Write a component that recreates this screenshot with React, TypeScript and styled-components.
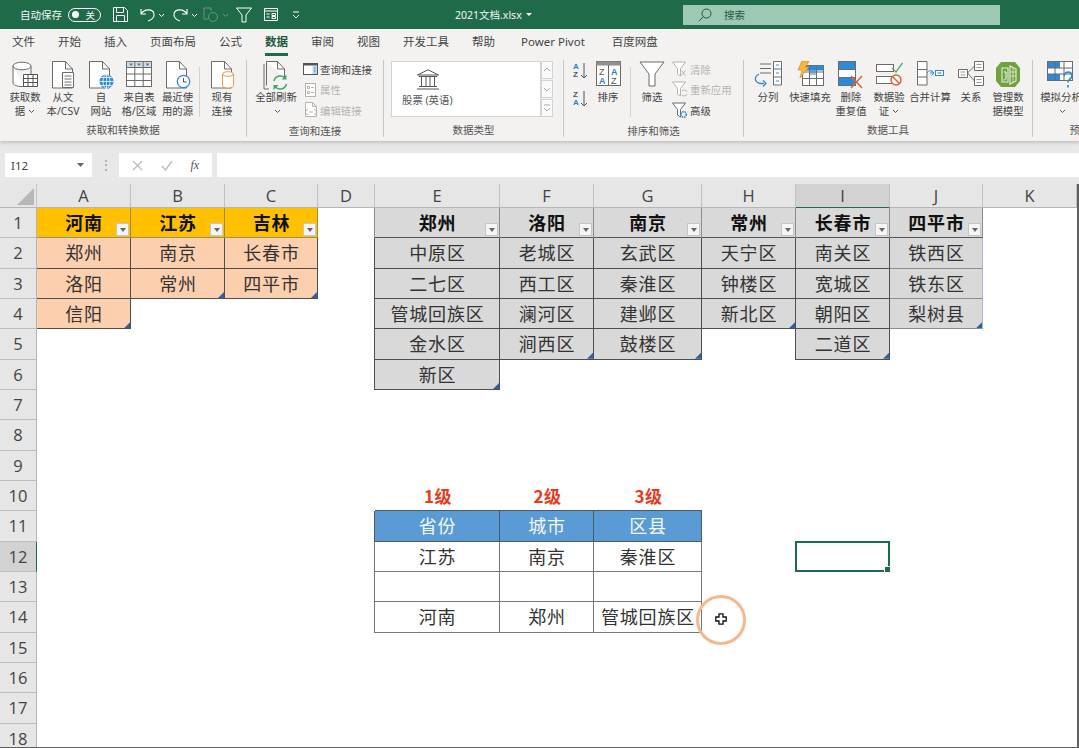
import React from 'react';
import styled, { createGlobalStyle } from 'styled-components';

const GlobalStyle = createGlobalStyle`
  html, body { margin: 0; padding: 0; background: #fff; }
  body { font-family: "Noto Sans", "Noto Sans CJK SC", sans-serif; overflow: hidden; }
`;

const Page = styled.div`
  width: 1079px;
  height: 748px;
  display: flex;
  flex-direction: column;
  overflow: hidden;
`;

/* title bar */
const TitleBar = styled.div`
  height: 29px;
  flex: none;
  background: #1f6b49;
  color: #f2f7f4;
  display: flex;
  align-items: center;
  padding-left: 20px;
  box-sizing: border-box;
`;
const QuickBar = styled.div`
  width: 435px;
  display: flex;
  align-items: center;
`;
const AutoSave = styled.span`
  font-size: 10.5px;
  width: 48px;
`;
const Toggle = styled.span`
  width: 33px;
  height: 14px;
  box-sizing: border-box;
  border: 1px solid #fff;
  border-radius: 7px;
  display: flex;
  align-items: center;
  justify-content: space-between;
  padding: 0 5px 0 3px;
  font-size: 9.5px;
  margin-right: 12px;
  &::before {
    content: '';
    width: 7px;
    height: 7px;
    border-radius: 50%;
    background: #fff;
  }
`;
const QuickIcon = styled.span<{ $w: number }>`
  width: ${({ $w }) => $w}px;
  display: flex;
  align-items: center;
`;
const FileName = styled.div`
  width: 228px;
  font-size: 10.5px;
  display: flex;
  align-items: center;
  gap: 4px;
`;
const SearchBox = styled.div`
  width: 317px;
  height: 20px;
  background: #9cc8b4;
  color: #1d5a3f;
  font-size: 10.5px;
  display: flex;
  align-items: center;
  gap: 12px;
  padding-left: 15px;
  box-sizing: border-box;
`;

/* tabs */
const TabRow = styled.div`
  height: 27px;
  flex: none;
  background: #f3f2f1;
  display: flex;
  gap: 23px;
  padding-left: 12px;
  box-sizing: border-box;
`;
const Tab = styled.div<{ $active?: boolean; $latin?: boolean }>`
  height: 27px;
  box-sizing: border-box;
  padding: 5px ${({ $latin }) => ($latin ? '4px 0 3px' : '0 0 0')};
  font-size: 11.5px;
  line-height: 16px;
  white-space: nowrap;
  color: ${({ $active }) => ($active ? '#1e5b3e' : '#444')};
  font-weight: ${({ $active }) => ($active ? 600 : 400)};
  border-bottom: ${({ $active }) => ($active ? '3px solid #1f6b49' : '3px solid transparent')};
`;

/* ribbon */
const Ribbon = styled.div`
  height: 85px;
  flex: none;
  background: #f3f2f1;
  display: flex;
  box-shadow: 0 2px 3px rgba(0, 0, 0, 0.16);
  position: relative;
  z-index: 2;
  overflow: hidden;
`;
const Group = styled.div<{ $w: number; $pad: number; $last?: boolean }>`
  width: ${({ $w }) => $w}px;
  flex: none;
  box-sizing: border-box;
  margin-top: 4px;
  margin-bottom: 4px;
  padding-left: ${({ $pad }) => $pad}px;
  border-right: ${({ $last }) => ($last ? 'none' : '1px solid #c9c7c5')};
  display: flex;
  flex-direction: column;
`;
const GroupBody = styled.div`
  height: 60px;
  display: flex;
  align-items: flex-start;
  padding-top: 1px;
`;
const GroupLabel = styled.div<{ $pad: number }>`
  margin-left: -${({ $pad }) => $pad}px;
  text-align: center;
  font-size: 10.5px;
  line-height: 14px;
  color: #555;
  margin-top: 3px;
  white-space: nowrap;
`;
const BigButton = styled.div<{ $w: number }>`
  width: ${({ $w }) => $w}px;
  flex: none;
  display: flex;
  flex-direction: column;
  align-items: center;
`;
const BigIcon = styled.div`
  height: 30px;
  display: flex;
  align-items: flex-start;
  justify-content: center;
`;
const BigLabel = styled.div`
  font-size: 10.4px;
  line-height: 13.5px;
  color: #444;
  text-align: center;
  white-space: pre-line;
`;
const Divider = styled.div<{ $ml: number; $mr: number }>`
  width: 1px;
  height: 50px;
  margin: 6px ${({ $mr }) => $mr}px 0 ${({ $ml }) => $ml}px;
  background: #d4d2d0;
  flex: none;
`;
const SmallColumn = styled.div<{ $ml: number }>`
  margin: -2px 0 0 ${({ $ml }) => $ml}px;
  display: flex;
  flex-direction: column;
  flex: none;
`;
const SmallButton = styled.div<{ $off?: boolean }>`
  height: 20.5px;
  display: flex;
  align-items: center;
  gap: 1px;
  font-size: 10.4px;
  white-space: nowrap;
  color: ${({ $off }) => ($off ? '#b5b3b1' : '#444')};
`;
const SortColumn = styled.div`
  width: 15px;
  margin: 0 2px 0 1px;
  flex: none;
  display: flex;
  flex-direction: column;
  gap: 8px;
`;
const TypeBox = styled.div`
  width: 150px;
  height: 56px;
  box-sizing: border-box;
  background: #fff;
  border: 1px solid #d6d4d2;
  display: flex;
  flex-direction: column;
  padding: 7px 0 0 10px;
  font-size: 10.4px;
  line-height: 14px;
  color: #555;
  gap: 3px;
`;
const BankWrap = styled.div`
  width: 52px;
  height: 21px;
  display: flex;
  justify-content: center;
`;
const ScrollColumn = styled.div`
  width: 12px;
  height: 56px;
  display: flex;
  flex-direction: column;
  gap: 1px;
`;
const ScrollButton = styled.div`
  flex: 1;
  background: #fafafa;
  border: 1px solid #d6d4d2;
  display: flex;
  align-items: center;
  justify-content: center;
`;
const ChevronMark = styled.svg`
  margin-left: 3px;
  vertical-align: 1px;
`;

/* formula bar */
const FormulaBar = styled.div`
  height: 43px;
  flex: none;
  background: #e8e8e8;
  display: flex;
  align-items: center;
  padding: 5px 0 0 5px;
  box-sizing: border-box;
`;
const NameBox = styled.div`
  width: 87px;
  height: 24px;
  background: #fff;
  box-sizing: border-box;
  display: flex;
  align-items: center;
  justify-content: space-between;
  padding: 0 7px 0 6px;
  font-size: 11.5px;
  color: #444;
`;
const GripDots = styled.div`
  width: 27px;
  text-align: center;
  color: #9a9a9a;
  font-size: 12px;
  line-height: 12px;
`;
const FormulaTools = styled.div`
  width: 93px;
  height: 24px;
  background: #fff;
  display: flex;
  align-items: center;
  justify-content: space-around;
  padding: 0 4px;
  box-sizing: border-box;
  margin-right: 5px;
`;
const FxMark = styled.span`
  font-family: "Liberation Serif", serif;
  font-style: italic;
  font-size: 12px;
  color: #555;
`;
const FormulaInput = styled.div`
  flex: 1;
  height: 24px;
  background: #fff;
`;

/* sheet */
const Sheet = styled.div`
  position: relative;
  flex: 1;
  min-height: 0;
  overflow: hidden;
  display: grid;
  grid-template-columns: 37px 94px 94px 93px 57px 125px 94px 108px 94px 94px 93px 94px;
  grid-template-rows: 24px repeat(18, 30.33px);
  border-right: 2px solid #5f5f5f;
  border-bottom: 1px solid #5f5f5f;
  background: #fff;
`;
const SelectAll = styled.div`
  grid-column: 1;
  grid-row: 1;
  background: #e6e6e6;
  border-right: 1px solid #c4c4c4;
  border-bottom: 1px solid #b5b5b5;
  display: flex;
  align-items: flex-end;
  justify-content: flex-end;
  padding: 0 2px 2px 0;
  &::after {
    content: '';
    width: 17px;
    height: 17px;
    background: #b7b7b7;
    clip-path: polygon(100% 0, 100% 100%, 0 100%);
  }
`;
const ColHead = styled.div<{ $col: number; $on?: boolean }>`
  grid-column: ${({ $col }) => $col};
  grid-row: 1;
  background: ${({ $on }) => ($on ? '#d2d2d2' : '#e6e6e6')};
  border-right: 1px solid #c0c0c0;
  border-bottom: ${({ $on }) => ($on ? '1px solid #1f6b49' : '1px solid #b5b5b5')};
  font-family: "Open Sans", sans-serif;
  font-size: 16.5px;
  line-height: 24px;
  text-align: center;
  color: #444;
`;
const RowHead = styled.div<{ $row: number; $on?: boolean }>`
  grid-column: 1;
  grid-row: ${({ $row }) => $row};
  background: ${({ $on }) => ($on ? '#d2d2d2' : '#e6e6e6')};
  border-right: ${({ $on }) => ($on ? '1px solid #1f6b49' : '1px solid #b5b5b5')};
  border-bottom: 1px solid #bdbdbd;
  box-sizing: border-box;
  font-family: "Open Sans", sans-serif;
  font-size: 16.5px;
  text-align: center;
  color: #444;
  display: flex;
  align-items: center;
  justify-content: center;
`;

type Kind = 'orange' | 'peach' | 'grayHead' | 'gray' | 'grayLight' | 'blue' | 'plain' | 'level';

const kindStyles: Record<Kind, string> = {
  orange: 'background:#ffc000;color:#111;font-weight:700;border-right:1px solid #a38a3a;border-bottom:1px solid #8f8f7a;',
  peach: 'background:#fccfae;color:#333;border-right:1px solid #4f4f4f;border-bottom:1px solid #4f4f4f;',
  grayHead: 'background:#d9d9d9;color:#111;font-weight:700;border-right:1px solid #8c8c8c;border-bottom:1px solid #555;box-shadow:-1px 0 0 #8c8c8c;',
  gray: 'background:#d9d9d9;color:#333;border-right:1px solid #4f4f4f;border-bottom:1px solid #4f4f4f;box-shadow:-1px 0 0 #4f4f4f;',
  grayLight: 'background:#d9d9d9;color:#333;border-right:1px solid #a9b8c8;border-bottom:1px solid #8c8c8c;',
  blue: 'background:#5b9bd5;color:#f4f8fc;border-right:1px solid #4c5a68;border-bottom:1px solid #4c5a68;box-shadow:-1px 0 0 #4c5a68,0 -1px 0 #4c5a68;',
  plain: 'background:#fff;color:#333;border-right:1px solid #777;border-bottom:1px solid #777;box-shadow:-1px 0 0 #777;',
  level: 'color:#e8391a;font-weight:700;font-size:17px;letter-spacing:0.4px;',
};

const Cell = styled.div<{ $col: number; $row: number; $kind: Kind }>`
  grid-column: ${({ $col }) => $col};
  grid-row: ${({ $row }) => $row};
  position: relative;
  box-sizing: border-box;
  display: flex;
  align-items: center;
  justify-content: center;
  padding: 0 0 1px 1px;
  font-family: "Noto Sans CJK SC", sans-serif;
  font-size: 18px;
  letter-spacing: 0.8px;
  white-space: nowrap;
  ${({ $kind }) => kindStyles[$kind]}
`;
const FilterButton = styled.span`
  position: absolute;
  right: 1px;
  bottom: 1px;
  width: 13px;
  height: 13px;
  box-sizing: border-box;
  background: #f5f5f5;
  border: 1px solid #c6c6c6;
  &::after {
    content: '';
    position: absolute;
    left: 2.5px;
    top: 4px;
    border-left: 3.5px solid transparent;
    border-right: 3.5px solid transparent;
    border-top: 4px solid #666;
  }
`;
const TableCorner = styled.span`
  position: absolute;
  right: 0;
  bottom: 0;
  width: 6px;
  height: 6px;
  background: #2f619e;
  clip-path: polygon(100% 0, 100% 100%, 0 100%);
`;
const ActiveCell = styled.div`
  grid-column: 10;
  grid-row: 13;
  position: relative;
  box-sizing: border-box;
  border: 2px solid #1f6b49;
  margin: -1px 0 0 -1px;
  &::after {
    content: '';
    position: absolute;
    right: -3px;
    bottom: -3px;
    width: 5px;
    height: 5px;
    background: #1f6b49;
    border: 1px solid #fff;
  }
`;
const ClickRing = styled.div`
  position: absolute;
  left: 696px;
  top: 411px;
  width: 50px;
  height: 50px;
  box-sizing: border-box;
  border: 3.5px solid #f6b78f;
  border-radius: 50%;
`;
const PointerMark = styled.svg`
  position: absolute;
  left: 715px;
  top: 429px;
`;

/* icons */
const G = '#6b6b6b';

const Chevron = () => (
  <ChevronMark width="7" height="5" viewBox="0 0 7 5">
    <path d="M1 1l2.5 2.5L6 1" fill="none" stroke="#555" strokeWidth="1" />
  </ChevronMark>
);

const DocShape = () => (
  <>
    <path d="M1.5.5h13l7 7.5v19h-20z" fill="#fff" stroke={G} />
    <path d="M14.5.5V8h7" fill="none" stroke={G} />
  </>
);

const IconDb = () => (
  <svg width="26" height="27" viewBox="0 0 26 27">
    <path d="M1 5v17c0 2.2 4 3.5 9 3.5h2M19 5v9" fill="#fff" stroke={G} />
    <ellipse cx="10" cy="5" rx="9" ry="3.8" fill="#fff" stroke={G} />
    <path d="M11.5 13.5h14v12h-14zM11.5 17.5h14M11.5 21.5h14M16 13.5v12M21 13.5v12" fill="#fff" stroke="#555" />
  </svg>
);
const IconText = () => (
  <svg width="24" height="28" viewBox="0 0 24 28">
    <DocShape />
    <path d="M11.5 11.5h11v15h-11zM13.5 15h7M13.5 18h7M13.5 21h7M13.5 24h7" fill="#fff" stroke={G} />
  </svg>
);
const IconWeb = () => (
  <svg width="26" height="28" viewBox="0 0 26 28">
    <DocShape />
    <circle cx="18.5" cy="20.5" r="7" fill="#2e8ad8" />
    <path d="M11.5 20.5h14M18.5 13.5v14M13 16.5h11M13 24.5h11" stroke="#fff" strokeWidth="0.8" fill="none" />
    <ellipse cx="18.5" cy="20.5" rx="3.5" ry="7" fill="none" stroke="#fff" strokeWidth="0.8" />
  </svg>
);
const IconSheet = () => (
  <svg width="26" height="27" viewBox="0 0 26 27">
    <rect x="0.5" y="0.5" width="25" height="25" fill="#fff" stroke={G} />
    <rect x="1" y="1" width="24" height="5" fill="#d9d9d9" />
    <path d="M.5 6.5h25M.5 13h25M.5 19.5h25M8.8.5v25M17.2.5v25" stroke={G} fill="none" />
    <path d="M3 2.5h4l-2 2.5zM11 2.5h4l-2 2.5zM19.5 2.5h4l-2 2.5z" fill="#2e7fd0" />
  </svg>
);
const IconRecent = () => (
  <svg width="26" height="28" viewBox="0 0 26 28">
    <DocShape />
    <circle cx="18.5" cy="20.5" r="6.2" fill="#fff" stroke="#2e8ad8" strokeWidth="1.3" />
    <path d="M18.5 17v4h3" fill="none" stroke="#555" />
  </svg>
);
const IconConn = () => (
  <svg width="25" height="28" viewBox="0 0 25 28">
    <DocShape />
    <path d="M12.5 13v11.5c0 1.5 2.5 2.5 5.5 2.5s5.5-1 5.5-2.5V13" fill="#fff" stroke="#e59a4f" />
    <ellipse cx="18" cy="13" rx="5.5" ry="2.3" fill="#fff" stroke="#e59a4f" />
  </svg>
);
const IconRefresh = () => (
  <svg width="26" height="30" viewBox="0 0 26 30">
    <path d="M1 3v25h5" fill="none" stroke={G} />
    <path d="M3.5.5h11l7 7.5v8M3.5.5v24" fill="#fff" stroke={G} />
    <path d="M14.5.5V8h7" fill="none" stroke={G} />
    <path d="M11 20a6.5 6.5 0 0 1 11.5-2.5M23.5 23a6.5 6.5 0 0 1-11.5 2.5" fill="none" stroke="#3fa868" strokeWidth="1.5" />
    <path d="M23.5 13.5v5h-5zM10.5 29v-5h5z" fill="#3fa868" />
  </svg>
);
const IconQuery = () => (
  <svg width="16" height="13" viewBox="0 0 16 13">
    <rect x="0.5" y="0.5" width="14" height="11" fill="#fff" stroke="#555" />
    <rect x="0.5" y="0.5" width="14" height="2" fill="#555" />
    <rect x="9.5" y="3" width="4.5" height="8" fill="#bcd6ef" />
    <path d="M11.7 4.5v5" stroke="#2e7fd0" strokeDasharray="1.5 1" />
  </svg>
);
const IconProps = () => (
  <svg width="16" height="14" viewBox="0 0 16 14">
    <rect x="2.5" y="0.5" width="10" height="13" fill="#fff" stroke="#b5b3b1" />
    <path d="M4.5 3.5h2v2h-2zM4.5 8.5h2v2h-2zM8 4.5h3M8 9.5h3" fill="none" stroke="#b5b3b1" />
  </svg>
);
const IconEditLinks = () => (
  <svg width="16" height="16" viewBox="0 0 16 16">
    <path d="M2.5.5h7l4 4v10h-11zM9.5.5v4h4" fill="#fff" stroke="#b5b3b1" />
    <path d="M6 10h4M5 12.5a2 2 0 0 1 0-5M11 7.5a2 2 0 0 1 0 5" fill="none" stroke="#b5b3b1" />
  </svg>
);
const IconBank = () => (
  <svg width="24" height="21" viewBox="0 0 24 21">
    <path d="M1.5 6L12 .8 22.5 6z" fill="none" stroke="#555" />
    <path d="M3 7.5h18M3 17.5h18M1 20h22M5.5 8v9M10 8v9M14 8v9M18.5 8v9" fill="none" stroke="#555" />
  </svg>
);
const IconSortPair = ({ down }: { down?: boolean }) => (
  <svg width="15" height="20" viewBox="0 0 15 20">
    <text x="0" y="8" fontSize="8" fontWeight="700" fontFamily="Liberation Sans, sans-serif" fill={down ? '#555' : '#2e7fd0'}>{down ? 'Z' : 'A'}</text>
    <text x="0" y="16" fontSize="8" fontWeight="700" fontFamily="Liberation Sans, sans-serif" fill={down ? '#2e7fd0' : '#555'}>{down ? 'A' : 'Z'}</text>
    <path d="M11 2v15M8 14l3 3 3-3" fill="none" stroke="#555" />
  </svg>
);
const IconSortBox = () => (
  <svg width="25" height="26" viewBox="0 0 25 26">
    <rect x="0.5" y="0.5" width="24" height="24" fill="#fff" stroke={G} />
    <rect x="0.5" y="0.5" width="24" height="4" fill="#8f8f8f" />
    <path d="M12.5 4v20" stroke={G} />
    <text x="3" y="14" fontSize="9" fontFamily="Liberation Sans, sans-serif" fill="#555">Z</text>
    <text x="15" y="14" fontSize="9" fontFamily="Liberation Sans, sans-serif" fontWeight="700" fill="#2e7fd0">A</text>
    <text x="3" y="23" fontSize="9" fontFamily="Liberation Sans, sans-serif" fontWeight="700" fill="#2e7fd0">A</text>
    <text x="15" y="23" fontSize="9" fontFamily="Liberation Sans, sans-serif" fill="#555">Z</text>
  </svg>
);
const IconFunnel = () => (
  <svg width="26" height="26" viewBox="0 0 26 26">
    <path d="M1 1h24L16 13v12h-6V13z" fill="#fff" stroke={G} />
  </svg>
);
const SmallFunnel = ({ color, mark }: { color: string; mark?: 'x' | 'redo' | 'gear' }) => (
  <svg width="17" height="17" viewBox="0 0 17 17">
    <path d="M.5 1h13L8.5 7.5V15L5.5 13V7.5z" fill="#fff" stroke={color} />
    {mark === 'x' && <path d="M9.5 9.5l4 5M13.5 9.5l-4 5" stroke={color} fill="none" />}
    {mark === 'redo' && <path d="M10 10a3 3 0 0 1 5 1M15 13a3 3 0 0 1-5 1" stroke={color} fill="none" />}
    {mark === 'gear' && <circle cx="11.5" cy="12.5" r="2.8" fill="none" stroke="#2e7fd0" strokeWidth="1.6" strokeDasharray="1.5 .8" />}
  </svg>
);
const IconSplit = () => (
  <svg width="28" height="27" viewBox="0 0 28 27">
    <path d="M6 3h11M6 7.5h11M6 12h11" stroke={G} fill="none" />
    <path d="M5 13c-5 3-5 8 1 9.5h4" fill="none" stroke="#2e8ad8" strokeWidth="1.3" />
    <path d="M9 19.5l3 3-3 3" fill="none" stroke="#2e8ad8" strokeWidth="1.3" />
    <path d="M19.5.5h8v23.5h-8zM19.5 8h8M19.5 16h8" fill="#fff" stroke={G} />
    <path d="M22 4h3M22 12h3M22 20h3" stroke="#2e8ad8" />
  </svg>
);
const IconFlash = () => (
  <svg width="27" height="27" viewBox="0 0 27 27">
    <rect x="5.5" y="4.5" width="21" height="20" fill="#fff" stroke={G} />
    <rect x="5.5" y="4.5" width="21" height="5" fill="#2e8ad8" />
    <rect x="12" y="9" width="7" height="5" fill="#2e8ad8" opacity="0.5" />
    <path d="M12.5 4.5v20M19.5 4.5v20M5.5 11h21M5.5 17.5h21" stroke={G} fill="none" />
    <path d="M5 0h7L8.5 6H12L3 17l2-8H1z" fill="#f6b73c" stroke="#d98a1a" strokeWidth="0.7" />
  </svg>
);
const IconDupes = () => (
  <svg width="26" height="28" viewBox="0 0 26 28">
    <rect x="0.5" y="0.5" width="17" height="24" fill="#fff" stroke={G} />
    <rect x="1" y="1" width="16" height="7" fill="#2e8ad8" />
    <rect x="1" y="16" width="16" height="8" fill="#2e8ad8" />
    <path d="M.5 8.5h17M.5 16.5h17" stroke={G} />
    <path d="M13 15l11 12M24 15L13 27" stroke="#e0613c" strokeWidth="1.5" fill="none" />
  </svg>
);
const IconValidate = () => (
  <svg width="27" height="26" viewBox="0 0 27 26">
    <rect x="0.5" y="3.5" width="17" height="7" fill="#fff" stroke={G} />
    <rect x="0.5" y="15.5" width="17" height="7" fill="#fff" stroke={G} />
    <path d="M16 7l4 4 6.5-9" fill="none" stroke="#4caf6a" strokeWidth="1.3" />
    <circle cx="20" cy="19" r="5" fill="#fff" stroke="#e0613c" strokeWidth="1.5" />
    <path d="M16.5 15.5l7 7" stroke="#e0613c" strokeWidth="1.5" />
  </svg>
);
const IconMerge = () => (
  <svg width="27" height="26" viewBox="0 0 27 26">
    <path d="M.5.5h9.5v23.5H.5zM.5 8.5H10M.5 16h9.5" fill="#fff" stroke={G} />
    <path d="M10 12c2-3 4-3 6-.5M13 12h4" fill="none" stroke="#2e8ad8" />
    <path d="M14.5 9.5l2.5 2.5-2.5 2.5" fill="none" stroke="#2e8ad8" />
    <rect x="18.5" y="9.5" width="8" height="5" fill="#fff" stroke="#2e8ad8" />
    <path d="M20.5 12h4" stroke={G} />
  </svg>
);
const IconRelation = () => (
  <svg width="26" height="25" viewBox="0 0 26 25">
    <path d="M.5 8.5h9v8h-9zM16.5.5h9v9h-9zM16.5 15.5h9v9h-9z" fill="#fff" stroke={G} />
    <path d="M2.5 11h5M2.5 14h5M18.5 3.5h5M18.5 6.5h5M18.5 18.5h5M18.5 21.5h5" stroke="#999" />
    <path d="M16.5 5l-7 7 7 8" fill="none" stroke={G} />
  </svg>
);
const IconModel = () => (
  <svg width="26" height="27" viewBox="0 0 26 27">
    <path d="M6 1h14l5 6v13l-5 6H6l-5-6V7z" fill="#71a140" />
    <path d="M7 7h6v14H7zM15 5l6 3v12l-6 3z" fill="none" stroke="#e7f0db" strokeWidth="1.1" />
    <path d="M15 11h6M15 15h6M18 7v14" stroke="#e7f0db" strokeWidth="0.8" />
    <path d="M9 11h2v6c0 1.5-1 2-2.5 2" fill="none" stroke="#fff" />
  </svg>
);
const IconWhatIf = () => (
  <svg width="28" height="28" viewBox="0 0 28 28">
    <rect x="0.5" y="0.5" width="25" height="19" fill="#fff" stroke={G} />
    <rect x="1" y="1" width="12" height="6" fill="#2e8ad8" />
    <rect x="1" y="13" width="12" height="6" fill="#2e8ad8" />
    <path d="M.5 7h25M.5 13h25M8 .5v19M17 .5v19" stroke={G} fill="none" />
    <path d="M17 15c1-5 8-5 8-.5 0 3.5-4 3.5-4 7M21 24v2.5" fill="none" stroke="#2e8ad8" strokeWidth="1.7" />
  </svg>
);
const ScrollArrow = ({ d }: { d: string }) => (
  <svg width="8" height="8" viewBox="0 0 8 8">
    <path d={d} fill="none" stroke="#aaa" />
  </svg>
);

const tabs = ['文件', '开始', '插入', '页面布局', '公式', '数据', '审阅', '视图', '开发工具', '帮助', 'Power Pivot', '百度网盘'];

type TableColumn = { col: number; head: string; items: string[]; headKind: Kind; kind: Kind };

const tableColumns: TableColumn[] = [
  { col: 2, head: '河南', items: ['郑州', '洛阳', '信阳'], headKind: 'orange', kind: 'peach' },
  { col: 3, head: '江苏', items: ['南京', '常州'], headKind: 'orange', kind: 'peach' },
  { col: 4, head: '吉林', items: ['长春市', '四平市'], headKind: 'orange', kind: 'peach' },
  { col: 6, head: '郑州', items: ['中原区', '二七区', '管城回族区', '金水区', '新区'], headKind: 'grayHead', kind: 'gray' },
  { col: 7, head: '洛阳', items: ['老城区', '西工区', '澜河区', '涧西区'], headKind: 'grayHead', kind: 'gray' },
  { col: 8, head: '南京', items: ['玄武区', '秦淮区', '建邺区', '鼓楼区'], headKind: 'grayHead', kind: 'gray' },
  { col: 9, head: '常州', items: ['天宁区', '钟楼区', '新北区'], headKind: 'grayHead', kind: 'gray' },
  { col: 10, head: '长春市', items: ['南关区', '宽城区', '朝阳区', '二道区'], headKind: 'grayHead', kind: 'gray' },
  { col: 11, head: '四平市', items: ['铁西区', '铁东区', '梨树县'], headKind: 'grayHead', kind: 'grayLight' },
];

// bottom table: row 10 labels, row 11 header, rows 12-14 body
const pickerRows: { row: number; kind: Kind; texts: string[] }[] = [
  { row: 11, kind: 'level', texts: ['1级', '2级', '3级'] },
  { row: 12, kind: 'blue', texts: ['省份', '城市', '区县'] },
  { row: 13, kind: 'plain', texts: ['江苏', '南京', '秦淮区'] },
  { row: 14, kind: 'plain', texts: ['', '', ''] },
  { row: 15, kind: 'plain', texts: ['河南', '郑州', '管城回族区'] },
];

const colLetters = ['A', 'B', 'C', 'D', 'E', 'F', 'G', 'H', 'I', 'J', 'K'];
const rowNumbers = Array.from({ length: 18 }, (_, i) => i + 1);

export default function App() {
  return (
    <Page>
      <GlobalStyle />
      <TitleBar>
        <QuickBar>
          <AutoSave>自动保存</AutoSave>
          <Toggle>关</Toggle>
          <QuickIcon $w={26}>
            <svg width="15" height="15" viewBox="0 0 15 15" fill="none" stroke="#fff">
              <path d="M.5.5h11l3 3v11H.5zM3.5.5v5h7v-5M3.5 14.5v-6h8v6" />
            </svg>
          </QuickIcon>
          <QuickIcon $w={33}>
            <svg width="27" height="15" viewBox="0 0 27 15" fill="none" stroke="#fff">
              <path d="M2 2v5h5M2 7c3-5 12-6 13 0 .5 3-2 6-6 7" strokeWidth="1.1" />
              <path d="M20 7l2.5 2.5L25 7" />
            </svg>
          </QuickIcon>
          <QuickIcon $w={31}>
            <svg width="27" height="15" viewBox="0 0 27 15" fill="none" stroke="#fff">
              <path d="M15 2v5h-5M15 7C12 2 3 1 2 7c-.5 3 2 6 6 7" strokeWidth="1.1" />
              <path d="M20 7l2.5 2.5L25 7" />
            </svg>
          </QuickIcon>
          <QuickIcon $w={33}>
            <svg width="27" height="16" viewBox="0 0 27 16" fill="none" stroke="#5f9a7f">
              <path d="M1 1h7v3M1 1v11h4" />
              <circle cx="10" cy="10" r="4.5" />
              <path d="M20 7l2.5 2.5L25 7" />
            </svg>
          </QuickIcon>
          <QuickIcon $w={28}>
            <svg width="16" height="16" viewBox="0 0 16 16" fill="none" stroke="#fff">
              <path d="M.5 1h15L10 8v7H6V8z" />
            </svg>
          </QuickIcon>
          <QuickIcon $w={28}>
            <svg width="14" height="13" viewBox="0 0 14 13" fill="none" stroke="#fff">
              <path d="M.5.5h13v12H.5zM.5 3h13" />
              <path d="M2.5 6h3M2.5 9h3M8 5.5h3.5v2H8zM8 8.5h3.5v2H8z" />
            </svg>
          </QuickIcon>
          <QuickIcon $w={12}>
            <svg width="8" height="8" viewBox="0 0 8 8" fill="none" stroke="#fff">
              <path d="M1 1h6M1 4l3 3 3-3" />
            </svg>
          </QuickIcon>
        </QuickBar>
        <FileName>
          2021文档.xlsx
          <svg width="7" height="5" viewBox="0 0 7 5">
            <path d="M0 1h6L3 4z" fill="#fff" />
          </svg>
        </FileName>
        <SearchBox>
          <svg width="14" height="14" viewBox="0 0 14 14" fill="none" stroke="#1d5a3f">
            <circle cx="8.5" cy="5.5" r="4.5" />
            <path d="M5 9l-4 4" />
          </svg>
          搜索
        </SearchBox>
      </TitleBar>

      <TabRow>
        {tabs.map((t) => (
          <Tab key={t} $active={t === '数据'} $latin={t === 'Power Pivot'}>{t}</Tab>
        ))}
      </TabRow>

      <Ribbon>
        <Group $w={247} $pad={6}>
          <GroupBody>
            <BigButton $w={38}><BigIcon><IconDb /></BigIcon><BigLabel>获取数{'\n'}据<Chevron /></BigLabel></BigButton>
            <BigButton $w={38}><BigIcon><IconText /></BigIcon><BigLabel>从文{'\n'}本/CSV</BigLabel></BigButton>
            <BigButton $w={38}><BigIcon><IconWeb /></BigIcon><BigLabel>自{'\n'}网站</BigLabel></BigButton>
            <BigButton $w={38}><BigIcon><IconSheet /></BigIcon><BigLabel>来自表{'\n'}格/区域</BigLabel></BigButton>
            <BigButton $w={39}><BigIcon><IconRecent /></BigIcon><BigLabel>最近使{'\n'}用的源</BigLabel></BigButton>
            <Divider $ml={2} $mr={3} />
            <BigButton $w={38}><BigIcon><IconConn /></BigIcon><BigLabel>现有{'\n'}连接</BigLabel></BigButton>
          </GroupBody>
          <GroupLabel $pad={6}>获取和转换数据</GroupLabel>
        </Group>

        <Group $w={137} $pad={7}>
          <GroupBody>
            <BigButton $w={44}><BigIcon><IconRefresh /></BigIcon><BigLabel>全部刷新{'\n'}<Chevron /></BigLabel></BigButton>
            <SmallColumn $ml={5}>
              <SmallButton><IconQuery />查询和连接</SmallButton>
              <SmallButton $off><IconProps />属性</SmallButton>
              <SmallButton $off><IconEditLinks />编辑链接</SmallButton>
            </SmallColumn>
          </GroupBody>
          <GroupLabel $pad={7}>查询和连接</GroupLabel>
        </Group>

        <Group $w={180} $pad={7}>
          <GroupBody>
            <TypeBox>
              <BankWrap><IconBank /></BankWrap>
              股票 (英语)
            </TypeBox>
            <ScrollColumn>
              <ScrollButton><ScrollArrow d="M1 5l3-3 3 3" /></ScrollButton>
              <ScrollButton><ScrollArrow d="M1 3l3 3 3-3" /></ScrollButton>
              <ScrollButton><ScrollArrow d="M1 1h6M1 4l3 3 3-3" /></ScrollButton>
            </ScrollColumn>
          </GroupBody>
          <GroupLabel $pad={7}>数据类型</GroupLabel>
        </Group>

        <Group $w={180} $pad={8}>
          <GroupBody>
            <SortColumn>
              <IconSortPair />
              <IconSortPair down />
            </SortColumn>
            <BigButton $w={36}><BigIcon><IconSortBox /></BigIcon><BigLabel>排序</BigLabel></BigButton>
            <Divider $ml={4} $mr={3} />
            <BigButton $w={36}><BigIcon><IconFunnel /></BigIcon><BigLabel>筛选</BigLabel></BigButton>
            <SmallColumn $ml={2}>
              <SmallButton $off><SmallFunnel color="#b5b3b1" mark="x" />清除</SmallButton>
              <SmallButton $off><SmallFunnel color="#b5b3b1" mark="redo" />重新应用</SmallButton>
              <SmallButton><SmallFunnel color={G} mark="gear" />高级</SmallButton>
            </SmallColumn>
          </GroupBody>
          <GroupLabel $pad={8}>排序和筛选</GroupLabel>
        </Group>

        <Group $w={289} $pad={4}>
          <GroupBody>
            <BigButton $w={40}><BigIcon><IconSplit /></BigIcon><BigLabel>分列</BigLabel></BigButton>
            <BigButton $w={44}><BigIcon><IconFlash /></BigIcon><BigLabel>快速填充</BigLabel></BigButton>
            <BigButton $w={38}><BigIcon><IconDupes /></BigIcon><BigLabel>删除{'\n'}重复值</BigLabel></BigButton>
            <BigButton $w={38}><BigIcon><IconValidate /></BigIcon><BigLabel>数据验{'\n'}证<Chevron /></BigLabel></BigButton>
            <BigButton $w={44}><BigIcon><IconMerge /></BigIcon><BigLabel>合并计算</BigLabel></BigButton>
            <BigButton $w={38}><BigIcon><IconRelation /></BigIcon><BigLabel>关系</BigLabel></BigButton>
            <BigButton $w={36}><BigIcon><IconModel /></BigIcon><BigLabel>管理数{'\n'}据模型</BigLabel></BigButton>
          </GroupBody>
          <GroupLabel $pad={4}>数据工具</GroupLabel>
        </Group>

        <Group $w={94} $pad={6} $last>
          <GroupBody>
            <BigButton $w={44}><BigIcon><IconWhatIf /></BigIcon><BigLabel>模拟分析{'\n'}<Chevron /></BigLabel></BigButton>
          </GroupBody>
          <GroupLabel $pad={6}>预测</GroupLabel>
        </Group>
      </Ribbon>

      <FormulaBar>
        <NameBox>
          I12
          <svg width="8" height="5" viewBox="0 0 8 5"><path d="M0 0h7L3.5 4z" fill="#666" /></svg>
        </NameBox>
        <GripDots>⋮</GripDots>
        <FormulaTools>
          <svg width="11" height="11" viewBox="0 0 11 11"><path d="M1 1l9 9M10 1l-9 9" stroke="#bbb" strokeWidth="1.2" fill="none" /></svg>
          <svg width="12" height="11" viewBox="0 0 12 11"><path d="M1 6l3.5 4L11 1" stroke="#bbb" strokeWidth="1.3" fill="none" /></svg>
          <FxMark>fx</FxMark>
        </FormulaTools>
        <FormulaInput />
      </FormulaBar>

      <Sheet>
        <SelectAll />
        {colLetters.map((c, i) => (
          <ColHead key={c} $col={i + 2} $on={c === 'I'}>{c}</ColHead>
        ))}
        {rowNumbers.map((n) => (
          <RowHead key={n} $row={n + 1} $on={n === 12}>{n}</RowHead>
        ))}
        {tableColumns.map((t) => (
          <React.Fragment key={t.col}>
            <Cell $col={t.col} $row={2} $kind={t.headKind}>
              {t.head}
              <FilterButton />
            </Cell>
            {t.items.map((item, i) => (
              <Cell key={item} $col={t.col} $row={i + 3} $kind={t.kind}>
                {item}
                {i === t.items.length - 1 && <TableCorner />}
              </Cell>
            ))}
          </React.Fragment>
        ))}
        {pickerRows.map((r) =>
          r.texts.map((text, i) => (
            <Cell key={`${r.row}-${i}`} $col={i + 6} $row={r.row} $kind={r.kind}>{text}</Cell>
          ))
        )}
        <ActiveCell />
        <ClickRing />
        <PointerMark width="12" height="12" viewBox="0 0 12 12">
          <path d="M4 .8h4v3.2h3.2v4H8v3.2H4V8H.8V4H4z" fill="#fff" stroke="#111" strokeWidth="1.3" />
        </PointerMark>
      </Sheet>
    </Page>
  );
}
